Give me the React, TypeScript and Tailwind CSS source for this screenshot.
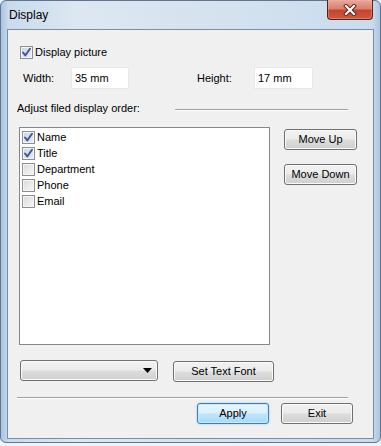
import React, { useState } from "react";

const font = "font-['Liberation_Sans',Arial,sans-serif]";

const CheckBox = ({ checked }: { checked: boolean }) => (
  <span
    className={`flex h-[13px] w-[13px] shrink-0 items-center justify-center border border-[#8e8f8f] ${
      checked
        ? "bg-[linear-gradient(135deg,#cdd6e6_0%,#e8edf5_100%)]"
        : "bg-[linear-gradient(135deg,#dcdcdc_0%,#f6f6f6_100%)]"
    } shadow-[inset_0_0_0_1px_#f4f4f4]`}
  >
    {checked && (
      <svg width="11" height="11" viewBox="0 0 11 11">
        <path
          d="M2 5.5 L4.3 8.4 L9 1.8"
          fill="none"
          stroke="#3b5a93"
          strokeWidth="1.9"
          strokeLinecap="round"
          strokeLinejoin="round"
        />
      </svg>
    )}
  </span>
);

const Button = ({
  label,
  className,
  primary,
}: {
  label: string;
  className?: string;
  primary?: boolean;
}) => (
  <button
    className={`flex h-[21px] items-center justify-center rounded-[3px] border text-[11px] leading-[13px] text-black ${
      primary
        ? "border-[#3c7fb1] bg-[linear-gradient(180deg,#eaf6fd_0%,#d9f0fc_48%,#bee6fd_52%,#a7d9f5_100%)] shadow-[inset_0_0_0_1px_#c8eafb,0_0_2px_#7fc4f0]"
        : "border-[#707070] bg-[linear-gradient(180deg,#f2f2f2_0%,#ebebeb_48%,#dddddd_52%,#cfcfcf_100%)] shadow-[inset_0_0_0_1px_#fafafa]"
    } ${className ?? ""}`}
  >
    {label}
  </button>
);

const fields = [
  { name: "Name", checked: true },
  { name: "Title", checked: true },
  { name: "Department", checked: false },
  { name: "Phone", checked: false },
  { name: "Email", checked: false },
];

export default function App() {
  const [width] = useState("35 mm");
  const [height] = useState("17 mm");

  return (
    <div className={`h-[446px] w-[381px] bg-[#eef3f8] ${font}`}>
      <div className="flex h-[443px] flex-col rounded-[6px] border border-[#61768e] bg-[linear-gradient(90deg,#a9c5e2_0%,#c9dbec_2%,#dce7f1_20%,#d4e2ef_60%,#c9dcee_98%,#a9c5e2_100%)] px-[6px] pb-[3px]">
        {/* Title bar */}
        <div className="flex h-[28px] items-start justify-between">
          <span className="pl-[2px] pt-[7px] text-[12px] leading-[14px] text-black">
            Display
          </span>
          <div className="-mt-px mr-px flex h-[20px] w-[46px] items-center justify-center rounded-b-[4px] border border-t-0 border-[#5a1e16] bg-[linear-gradient(180deg,#e9a99b_0%,#d9806e_45%,#c4442f_55%,#cf5a3f_100%)] shadow-[inset_0_0_0_1px_#f0b4a766]">
            <svg width="14" height="12" viewBox="0 0 14 12">
              <path
                d="M3 2 L11 10 M11 2 L3 10"
                stroke="#5a1e16"
                strokeWidth="4"
                strokeLinecap="square"
              />
              <path
                d="M3 2 L11 10 M11 2 L3 10"
                stroke="#ffffff"
                strokeWidth="2.2"
                strokeLinecap="square"
              />
            </svg>
          </div>
        </div>

        {/* Client area */}
        <div className="flex h-[410px] flex-col border border-[#7b8da2] bg-[#f0f0f0] text-[11px] leading-[13px] text-black">
          <div className="ml-[12px] mt-[16px] flex h-[13px] items-center">
            <CheckBox checked />
            <span className="ml-[2px]">Display picture</span>
          </div>

          <div className="mt-[8px] flex h-[22px] items-center">
            <span className="ml-[15px] w-[48px]">Width:</span>
            <div className="flex h-[22px] w-[58px] items-center border border-[#e9e9e9] bg-white pl-[3px]">
              {width}
            </div>
            <span className="ml-[68px] w-[57px]">Height:</span>
            <div className="flex h-[22px] w-[59px] items-center border border-[#e9e9e9] bg-white pl-[3px]">
              {height}
            </div>
          </div>

          <div className="mt-[12px] flex h-[14px] items-start">
            <span className="ml-[9px] leading-[14px]">Adjust filed display order:</span>
            <div className="ml-auto mr-[25px] mt-[8px] w-[173px] border-t border-b border-t-[#a0a0a0] border-b-white" />
          </div>

          <div className="mt-[12px] flex">
            <div className="ml-[11px] h-[218px] w-[251px] border border-[#828790] bg-white pl-[2px] pt-px">
              {fields.map((f) => (
                <div key={f.name} className="flex h-[16px] items-center">
                  <CheckBox checked={f.checked} />
                  <span className="ml-[2px]">{f.name}</span>
                </div>
              ))}
            </div>
            <div className="ml-[14px] mt-[2px] flex flex-col gap-[14px]">
              <Button label="Move Up" className="w-[73px]" />
              <Button label="Move Down" className="w-[73px]" />
            </div>
          </div>

          <div className="mt-[15px] flex items-start">
            <button className="ml-[12px] flex h-[21px] w-[138px] items-center justify-end rounded-[3px] border border-[#707070] bg-[linear-gradient(180deg,#f2f2f2_0%,#ebebeb_48%,#dddddd_52%,#cfcfcf_100%)] pr-[4px] shadow-[inset_0_0_0_1px_#fafafa]">
              <svg width="9" height="5" viewBox="0 0 9 5" className="mr-[1px]">
                <path d="M0 0 H9 L4.5 5 Z" fill="#000" />
              </svg>
            </button>
            <Button label="Set Text Font" className="ml-[15px] mt-px w-[101px]" />
          </div>

          <div className="ml-[9px] mt-[15px] w-[331px] border-t border-b border-t-[#a0a0a0] border-b-white" />

          <div className="mr-[20px] mt-[4px] flex justify-end gap-[12px]">
            <Button label="Apply" primary className="w-[72px]" />
            <Button label="Exit" className="w-[72px]" />
          </div>
        </div>
      </div>
    </div>
  );
}
